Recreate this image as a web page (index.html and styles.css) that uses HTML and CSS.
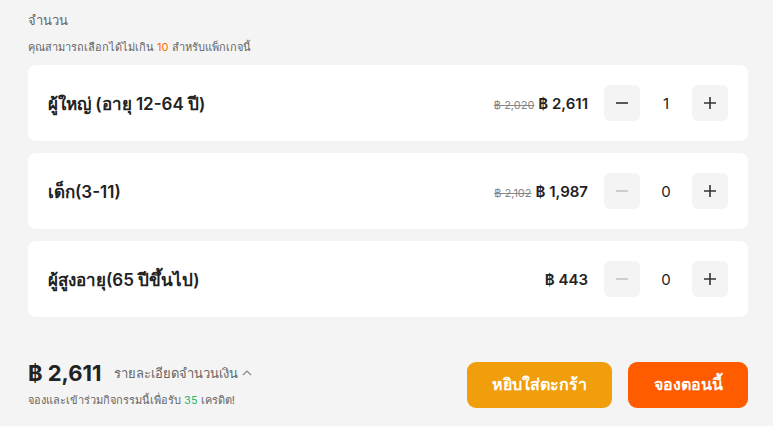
FILE: index.html
```html
<!DOCTYPE html>
<html lang="th">
<head>
<meta charset="utf-8">
<link rel="stylesheet" href="styles.css">
</head>
<body>
<div class="page">
  <div class="title">จำนวน</div>
  <div class="hint">คุณสามารถเลือกได้ไม่เกิน <span class="orange">10</span> สำหรับแพ็กเกจนี้</div>
  <div class="rows">
    <div class="card">
      <div class="label">ผู้ใหญ่ (อายุ 12-64 ปี)</div>
      <div class="right">
        <div class="price"><span class="old">฿ 2,020</span><span class="now">฿ 2,611</span></div>
        <div class="stepper">
          <button class="btn"><svg width="14" height="14" viewBox="0 0 14 14"><path d="M1 7h12" stroke="#333" stroke-width="1.6"/></svg></button>
          <span class="count">1</span>
          <button class="btn"><svg width="14" height="14" viewBox="0 0 14 14"><path d="M1 7h12M7 1v12" stroke="#333" stroke-width="1.6"/></svg></button>
        </div>
      </div>
    </div>
    <div class="card">
      <div class="label">เด็ก(3-11)</div>
      <div class="right">
        <div class="price"><span class="old">฿ 2,102</span><span class="now">฿ 1,987</span></div>
        <div class="stepper">
          <button class="btn"><svg width="14" height="14" viewBox="0 0 14 14"><path d="M1 7h12" stroke="#c4c4c4" stroke-width="1.6"/></svg></button>
          <span class="count">0</span>
          <button class="btn"><svg width="14" height="14" viewBox="0 0 14 14"><path d="M1 7h12M7 1v12" stroke="#333" stroke-width="1.6"/></svg></button>
        </div>
      </div>
    </div>
    <div class="card">
      <div class="label">ผู้สูงอายุ(65 ปีขึ้นไป)</div>
      <div class="right">
        <div class="price"><span class="now">฿ 443</span></div>
        <div class="stepper">
          <button class="btn"><svg width="14" height="14" viewBox="0 0 14 14"><path d="M1 7h12" stroke="#c4c4c4" stroke-width="1.6"/></svg></button>
          <span class="count">0</span>
          <button class="btn"><svg width="14" height="14" viewBox="0 0 14 14"><path d="M1 7h12M7 1v12" stroke="#333" stroke-width="1.6"/></svg></button>
        </div>
      </div>
    </div>
  </div>
  <div class="footer">
    <div class="summary">
      <div class="total-line"><span class="total">฿ 2,611</span><span class="detail">รายละเอียดจำนวนเงิน <svg width="10" height="8" viewBox="0 0 10 8"><path d="M1 6l4-4 4 4" fill="none" stroke="#888" stroke-width="1.2"/></svg></span></div>
      <div class="credit">จองและเข้าร่วมกิจกรรมนี้เพื่อรับ <span class="green">35</span> เครดิต!</div>
    </div>
    <div class="actions">
      <button class="cta cart">หยิบใส่ตะกร้า</button>
      <button class="cta book">จองตอนนี้</button>
    </div>
  </div>
</div>
</body>
</html>
```
FILE: styles.css
```css
html, body {
  margin: 0;
  padding: 0;
  background: #f4f4f4;
}
body {
  font-family: "Inter", "Noto Sans", sans-serif;
  color: #222;
}
.page {
  padding: 12px 25px 0 28px;
}
.title {
  font-size: 13px;
  color: #666;
  line-height: 16px;
}
.hint {
  font-size: 11px;
  color: #666;
  line-height: 14px;
  margin-top: 12px;
}
.orange { color: #ff6a00; }
.rows {
  display: flex;
  flex-direction: column;
  gap: 12px;
  margin-top: 11px;
}
.card {
  background: #fff;
  border-radius: 8px;
  height: 76px;
  padding: 0 20px;
  display: flex;
  align-items: center;
  justify-content: space-between;
  box-sizing: border-box;
}
.label {
  font-size: 17px;
  font-weight: 600;
  color: #222;
}
.right {
  display: flex;
  align-items: center;
  gap: 16px;
}
.price {
  display: flex;
  align-items: baseline;
  gap: 4px;
}
.old {
  font-size: 11px;
  color: #888;
  text-decoration: line-through;
}
.now {
  font-size: 15px;
  font-weight: 600;
  color: #222;
}
.stepper {
  display: flex;
  align-items: center;
}
.btn {
  width: 36px;
  height: 36px;
  border: none;
  border-radius: 6px;
  background: #f4f4f4;
  display: flex;
  align-items: center;
  justify-content: center;
  padding: 0;
}
.count {
  width: 52px;
  text-align: center;
  font-size: 15px;
  color: #222;
}
.footer {
  display: flex;
  justify-content: space-between;
  align-items: center;
  margin-top: 43px;
}
.total-line {
  display: flex;
  align-items: center;
  gap: 12px;
}
.total {
  font-size: 22px;
  font-weight: 700;
  color: #222;
}
.detail {
  font-size: 13px;
  color: #666;
  display: flex;
  align-items: center;
  gap: 4px;
}
.credit {
  font-size: 11px;
  color: #666;
  margin-top: 5px;
}
.green { color: #2bb673; }
.actions {
  display: flex;
  gap: 16px;
}
.cta {
  height: 46px;
  border: none;
  border-radius: 9px;
  color: #fff;
  font-family: inherit;
  font-size: 16px;
  font-weight: 700;
}
.cart {
  width: 145px;
  background: #f09e0c;
}
.book {
  width: 120px;
  background: #ff5c00;
}
```
